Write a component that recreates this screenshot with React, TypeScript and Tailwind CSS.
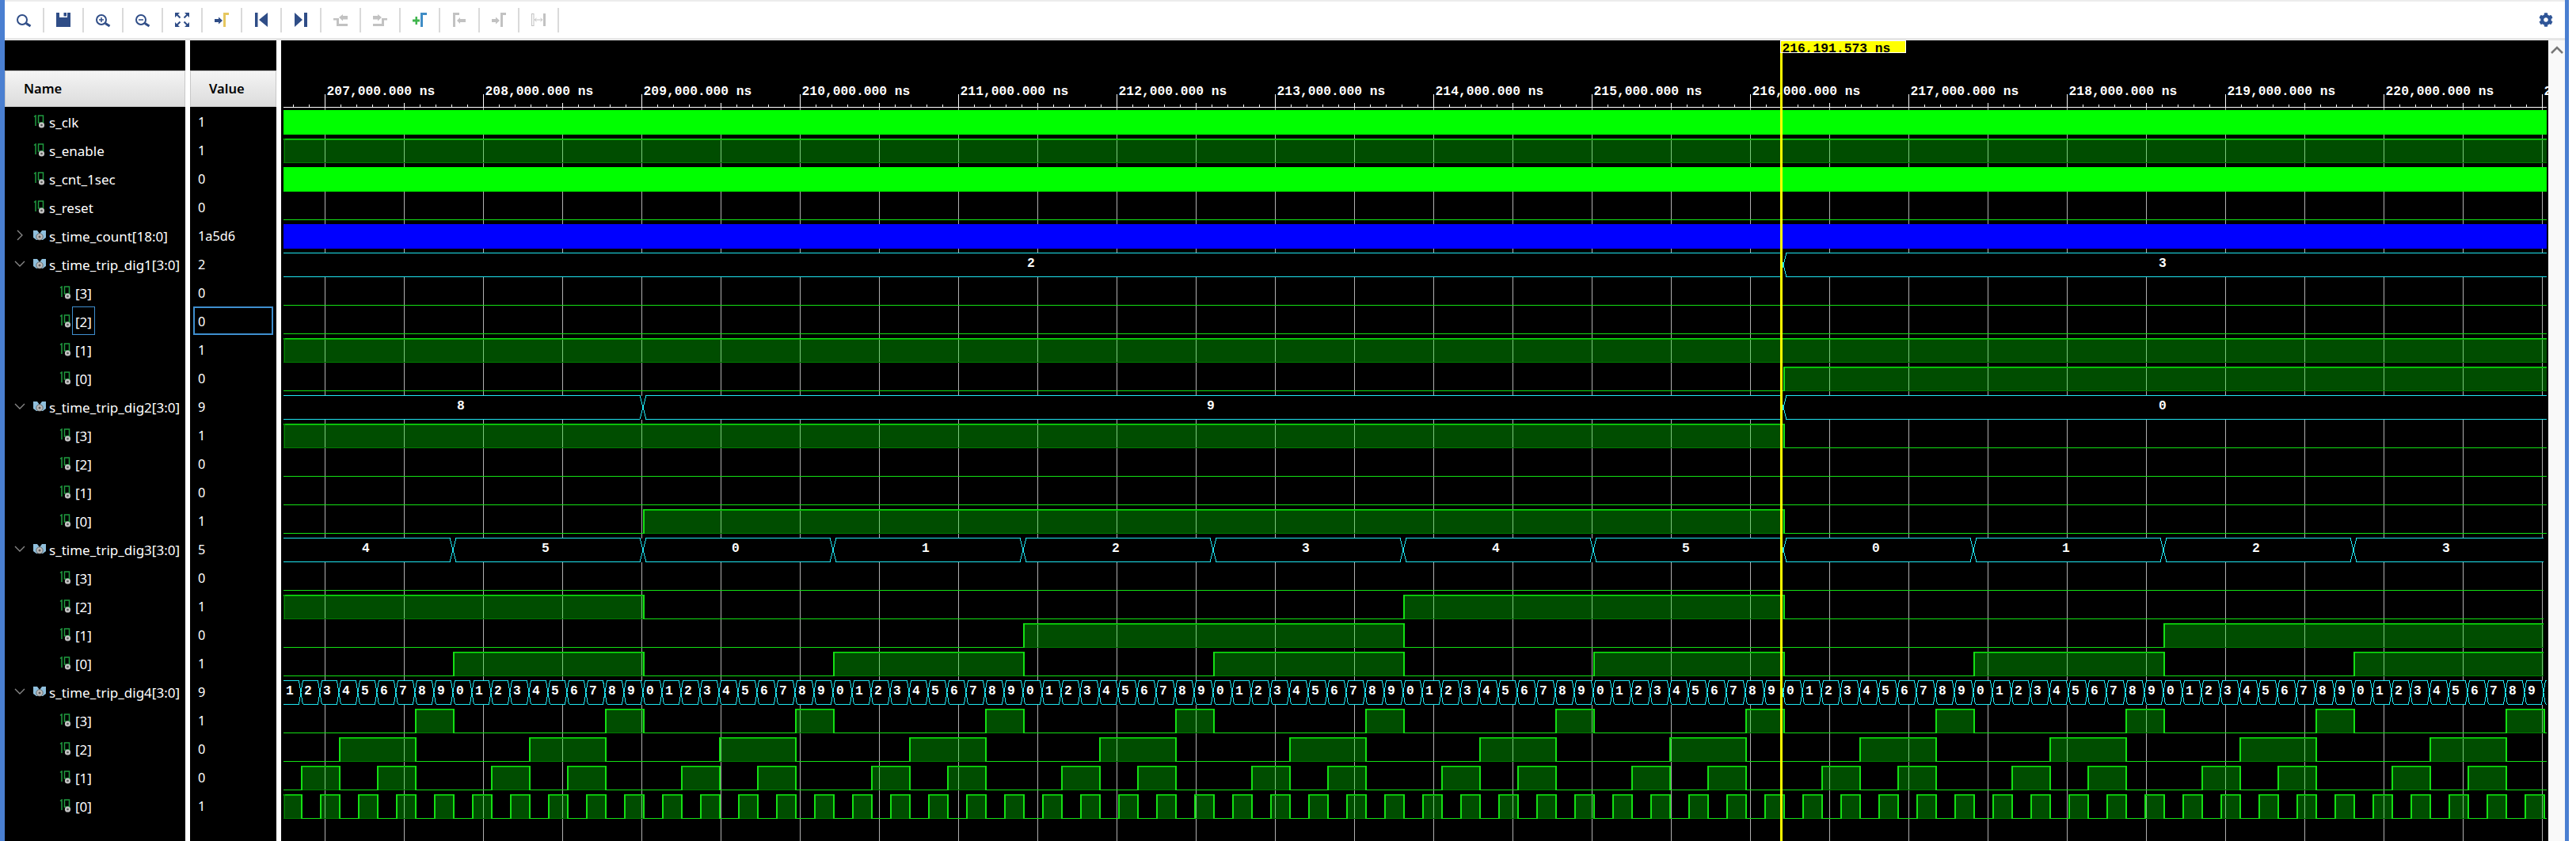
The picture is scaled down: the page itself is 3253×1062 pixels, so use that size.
import React from "react";
import { FaCog } from "react-icons/fa";

const L = 358;
const R = 3216;
const SWITCH = 2252;
const rowTop = (i: number) => 139 + 36 * i;

type Seg = { x0: number; x1: number; v: number };

const dig1: Seg[] = [
  { x0: L, x1: SWITCH, v: 2 },
  { x0: SWITCH, x1: R, v: 3 },
];
const dig2: Seg[] = [
  { x0: L, x1: 812, v: 8 },
  { x0: 812, x1: SWITCH, v: 9 },
  { x0: SWITCH, x1: R, v: 0 },
];
const dig3: Seg[] = [];
for (let n = -1; n < 11; n++) {
  dig3.push({
    x0: Math.max(L, 572 + 240 * n),
    x1: Math.min(R, 572 + 240 * (n + 1)),
    v: (n + 5 + 6) % 6,
  });
}
const dig4: Seg[] = [];
for (let n = -9; n < 111; n++) {
  dig4.push({
    x0: Math.max(L, 572 + 24 * n),
    x1: Math.min(R, 572 + 24 * (n + 1)),
    v: ((n % 10) + 10) % 10,
  });
}

const bitSegs = (segs: Seg[], bit: number) => {
  const out: Seg[] = [];
  segs.forEach((s) => {
    const v = (s.v >> bit) & 1;
    const last = out[out.length - 1];
    if (last && last.v === v) last.x1 = s.x1;
    else out.push({ x0: s.x0, x1: s.x1, v });
  });
  return out;
};

type Row = {
  name: string;
  value: string;
  kind: "scalar" | "vector";
  child?: boolean;
  open?: boolean;
  selected?: boolean;
};

const bits = (vals: string[], selected?: number): Row[] =>
  vals.map((value, i) => ({
    name: `[${3 - i}]`,
    value,
    kind: "scalar",
    child: true,
    selected: selected === i,
  }));

const rows: Row[] = [
  { name: "s_clk", value: "1", kind: "scalar" },
  { name: "s_enable", value: "1", kind: "scalar" },
  { name: "s_cnt_1sec", value: "0", kind: "scalar" },
  { name: "s_reset", value: "0", kind: "scalar" },
  { name: "s_time_count[18:0]", value: "1a5d6", kind: "vector", open: false },
  { name: "s_time_trip_dig1[3:0]", value: "2", kind: "vector", open: true },
  ...bits(["0", "0", "1", "0"], 1),
  { name: "s_time_trip_dig2[3:0]", value: "9", kind: "vector", open: true },
  ...bits(["1", "0", "0", "1"]),
  { name: "s_time_trip_dig3[3:0]", value: "5", kind: "vector", open: true },
  ...bits(["0", "1", "0", "1"]),
  { name: "s_time_trip_dig4[3:0]", value: "9", kind: "vector", open: true },
  ...bits(["1", "0", "0", "1"]),
];

const ScalarIcon = () => (
  <svg width="16" height="17" viewBox="0 0 16 17" className="shrink-0">
    <path d="M1 2.5 L3 1 V14" fill="none" stroke="#1f9a3f" strokeWidth="1.5" />
    <rect x="6.5" y="1" width="6" height="9" fill="none" stroke="#1f9a3f" strokeWidth="1.5" />
    <circle cx="10.5" cy="13" r="3.6" fill="#c4c4c4" />
    <circle cx="10.5" cy="13" r="1.3" fill="#555" />
  </svg>
);

const VectorIcon = () => (
  <svg width="16" height="14" viewBox="0 0 16 14" className="shrink-0">
    <path d="M0 1 H5 L8 5 L11 1 H16 V10 L12 13 H4 L0 10 Z" fill="#8fbfdc" />
    <circle cx="8" cy="9" r="4.2" fill="#bdbdbd" stroke="#333" strokeWidth="0.6" />
    <circle cx="8" cy="9" r="1.5" fill="#5c5c5c" />
  </svg>
);

const Chevron = ({ open }: { open?: boolean }) => (
  <svg width="14" height="14" viewBox="0 0 14 14" className="shrink-0">
    <path
      d={open ? "M1 4 L7 10 L13 4" : "M4 1 L10 7 L4 13"}
      fill="none"
      stroke="#8a8a8a"
      strokeWidth="1.3"
    />
  </svg>
);

const BLUE = "#2f4d87";
const GREY = "#c2c2c2";

const Lens = ({ mark }: { mark?: "plus" | "minus" }) => (
  <>
    <circle cx="8" cy="10" r="6" fill="none" stroke={BLUE} strokeWidth="2" />
    <path d="M13 14.5 L18.5 18" stroke={BLUE} strokeWidth="3" />
    {mark && <path d="M5 10 H11" stroke={BLUE} strokeWidth="1.5" />}
    {mark === "plus" && <path d="M8 7 V13" stroke={BLUE} strokeWidth="1.5" />}
  </>
);

const toolIcons: React.ReactNode[] = [
  <Lens key="find" />,
  <path key="save" fillRule="evenodd" d="M1 1 H5 V7 H15 V1 H19 V19 H1 Z M10.5 1 H14 V5.5 H10.5 Z" fill={BLUE} />,
  <Lens key="in" mark="plus" />,
  <Lens key="out" mark="minus" />,
  <g key="fit" fill={BLUE}>
    <path d="M1 1 H7 L1 7 Z M19 1 H13 L19 7 Z M1 19 H7 L1 13 Z M19 19 H13 L19 13 Z" />
    <path d="M3 3 L7.5 7.5 M17 3 L12.5 7.5 M3 17 L7.5 12.5 M17 17 L12.5 12.5" stroke={BLUE} strokeWidth="2" />
  </g>,
  <g key="cursor">
    <path d="M1 9 H6 V6.5 L11 11 L6 15.5 V13 H1 Z" fill={BLUE} />
    <path d="M12 1 H19 V4 H15 V19 H12 Z" fill="#e6c75f" />
  </g>,
  <path key="first" d="M2 1 H5.5 V19 H2 Z M18 1 V19 L7 10 Z" fill={BLUE} />,
  <path key="last" d="M2 1 L12 10 L2 19 Z M14 1 H18 V19 H14 Z" fill={BLUE} />,
  <path key="prev" d="M8 7 L13 3 V5 H19 V9.5 H13 V11.5 Z M1 8 H8 V15 H19 V18 H5 V10.5 H1 Z" fill={GREY} />,
  <path key="next" d="M12 7 L7 3 V5 H1 V9.5 H7 V11.5 Z M19 8 H12 V15 H1 V18 H15 V10.5 H19 Z" fill={GREY} />,
  <g key="add">
    <path d="M1 9.5 H4.5 V6 H7 V9.5 H10 V12.5 H7 V16 H4.5 V12.5 H1 Z" fill="#3fb54d" />
    <path d="M11 1 H19 V4 H14 V19 H11 Z" fill="#3f8dc6" />
  </g>,
  <g key="prevm" fill={GREY}>
    <path d="M2 1 H10 V4 H5 V19 H2 Z" />
    <path d="M7 11 L11 7 V9 H18 V13 H11 V15 Z" />
  </g>,
  <g key="nextm" fill={GREY}>
    <path d="M12 1 H19 V4 H15 V19 H12 Z" />
    <path d="M1 9 H6 V6.5 L11 11 L6 15.5 V13 H1 Z" />
  </g>,
  <g key="swap">
    <rect x="1.5" y="2.5" width="2.5" height="15" fill="none" stroke={GREY} />
    <rect x="16" y="2" width="3" height="16" fill={GREY} />
    <path d="M5 10 H15 M7.5 8 L5 10 L7.5 12 M12.5 8 L15 10 L12.5 12" fill="none" stroke={GREY} />
  </g>,
];

const Toolbar = () => (
  <div className="flex h-[46px] items-center bg-white">
    {toolIcons.map((icon, i) => (
      <React.Fragment key={i}>
        <div className="flex w-[48px] items-center justify-center">
          <svg width="20" height="20" viewBox="0 0 20 20">
            {icon}
          </svg>
        </div>
        <div className="h-[31px] w-[2px] bg-[#dadada]" />
      </React.Fragment>
    ))}
    <div className="flex-1" />
    <FaCog className="mr-[15px] h-[18px] w-[18px] text-[#2f5597]" />
  </div>
);

const monoFont = { fontFamily: '"Liberation Mono", monospace', fontSize: 16.3, fontWeight: 700 };

const Bus = ({ row, segs, slant }: { row: number; segs: Seg[]; slant: number }) => {
  const T = rowTop(row) + 0.5;
  const B = T + 30;
  let d = "";
  segs.forEach((s, i) => {
    const start = i === 0 ? s.x0 : s.x0 + slant;
    const end = i === segs.length - 1 ? s.x1 : s.x1 - slant;
    d += `M${start} ${T} H${end} M${start} ${B} H${end} `;
    if (i < segs.length - 1) {
      d += `M${end} ${T} L${s.x1 + slant} ${B} M${end} ${B} L${s.x1 + slant} ${T} `;
    }
  });
  return (
    <g>
      <rect x={L} y={T} width={R - L} height={30} fill="#000" />
      <path d={d} fill="none" stroke="#1fe6f2" strokeWidth="1" />
      {segs.map((s, i) =>
        s.x1 - s.x0 > 8 ? (
          <text
            key={i}
            x={(s.x0 + s.x1) / 2 - 3}
            y={T + 17.5}
            textAnchor="middle"
            fill="#fff"
            style={monoFont}
          >
            {s.v}
          </text>
        ) : null,
      )}
    </g>
  );
};

const Digital = ({ row, segs }: { row: number; segs: Seg[] }) => {
  const T = rowTop(row);
  const B = T + 30;
  return (
    <g>
      {segs.map((s, i) =>
        s.v ? (
          <g key={i}>
            <rect x={s.x0} y={T} width={s.x1 - s.x0} height={31} fill="#00ff00" fillOpacity="0.3" />
            <rect x={s.x0} y={B} width={s.x1 - s.x0} height={1} fill="#007a00" />
            <rect x={s.x0} y={T} width={s.x1 - s.x0} height={1} fill="#14e014" />
            <rect x={s.x0} y={T + 1} width={s.x1 - s.x0} height={1} fill="#00a800" />
            {s.x0 === L && <rect x={L + 1} y={T} width={1} height={31} fill="#007a00" />}
          </g>
        ) : (
          <rect key={i} x={s.x0} y={B} width={s.x1 - s.x0} height={1} fill="#14e014" />
        ),
      )}
      {segs.slice(1).map((s, i) => (
        <rect key={i} x={s.x0} y={T} width={2} height={31} fill="#14e014" />
      ))}
    </g>
  );
};

const gridXs = Array.from({ length: 29 }, (_, i) => 410 + 100 * i);
const minorXs = Array.from({ length: 143 }, (_, i) => 370 + 20 * i);
const labelKs = Array.from({ length: 15 }, (_, i) => 207 + i);

const Waves = () => (
  <svg
    width="2863"
    height="1011"
    viewBox="355 51 2863 1011"
    shapeRendering="crispEdges"
    className="block"
  >
    {/* ruler */}
    <rect x={L} y={135} width={R - L} height={1} fill="#fff" />
    {minorXs.map((x) => (
      <rect key={x} x={x} y={132} width={1} height={3} fill="#fff" />
    ))}
    {gridXs.map((x) => (
      <rect key={x} x={x} y={130} width={1} height={5} fill="#fff" />
    ))}
    {labelKs.map((k, i) => (
      <g key={k}>
        <rect x={410 + 200 * i} y={119} width={1} height={16} fill="#fff" />
        <text x={412.6 + 200 * i} y={120} fill="#fff" style={monoFont}>
          {k},000.000 ns
        </text>
      </g>
    ))}
    {/* grid */}
    {gridXs.map((x) => (
      <rect key={x} x={x} y={136} width={1} height={926} fill="#b0b0b0" />
    ))}
    <rect x={L} y={rowTop(0)} width={R - L} height={31} fill="#00ff00" />
    <Digital row={1} segs={[{ x0: L, x1: R, v: 1 }]} />
    <rect x={L} y={rowTop(2)} width={R - L} height={31} fill="#00ff00" />
    <Digital row={3} segs={[{ x0: L, x1: R, v: 0 }]} />
    <rect x={L} y={rowTop(4)} width={R - L} height={31} fill="#0000ff" />

    <Bus row={5} segs={dig1} slant={4} />
    {[3, 2, 1, 0].map((b, i) => (
      <Digital key={b} row={6 + i} segs={bitSegs(dig1, b)} />
    ))}
    <Bus row={10} segs={dig2} slant={4} />
    {[3, 2, 1, 0].map((b, i) => (
      <Digital key={b} row={11 + i} segs={bitSegs(dig2, b)} />
    ))}
    <Bus row={15} segs={dig3} slant={4} />
    {[3, 2, 1, 0].map((b, i) => (
      <Digital key={b} row={16 + i} segs={bitSegs(dig3, b)} />
    ))}
    <Bus row={20} segs={dig4} slant={2.5} />
    {[3, 2, 1, 0].map((b, i) => (
      <Digital key={b} row={21 + i} segs={bitSegs(dig4, b)} />
    ))}

    {/* cursor */}
    <rect x={2248} y={51} width={3} height={1011} fill="#ffff00" />
    <svg x={2248} y={51} width={159} height={16}>
      <rect x={0} y={0} width={159} height={16} fill="#ffff00" />
      <text x={2.5} y={15} fill="#000" style={monoFont}>
        216,191.573 ns
      </text>
      <rect x={0.5} y={0.5} width={158} height={15} fill="none" stroke="#fff" />
    </svg>
  </svg>
);

const sans = "font-['Noto_Sans','Open_Sans',sans-serif] text-white";

const NameRow = ({ row }: { row: Row }) => (
  <div className={`flex h-[36px] items-center ${row.child ? "pl-[69px]" : "pl-[12px]"}`}>
    {!row.child && (
      <div className="flex w-[24px] items-center">
        {row.open !== undefined && <Chevron open={row.open} />}
      </div>
    )}
    {row.kind === "scalar" ? <ScalarIcon /> : <VectorIcon />}
    <span
      className={`flex h-full items-center whitespace-nowrap border px-[3px] pt-[3px] text-[17px] ${
        row.selected ? "border-[#3f8fcf]" : "border-transparent"
      } ${sans}`}
    >
      {row.name}
    </span>
  </div>
);

const ValueRow = ({ row }: { row: Row }) => (
  <div
    className={`mx-[4px] flex h-[36px] items-center border-2 pl-[4px] pt-[3px] text-[16.3px] ${
      row.selected ? "border-[#3f8fcf]" : "border-transparent"
    } ${sans}`}
  >
    {row.value}
  </div>
);

const HeaderCell = ({ title }: { title: string }) => (
  <div className="mt-[38px] flex h-[46px] items-center border border-[#c8c8c8] bg-gradient-to-b from-[#f4f4f4] to-[#dcdcdc] pl-[23px] font-['Noto_Sans',sans-serif] text-[16.5px] font-semibold text-black">
    {title}
  </div>
);

export default function App() {
  return (
    <div className="flex h-[1062px] w-[3253px] overflow-hidden bg-white">
      <div className="w-[6px] bg-[#4a7fd1]" />
      <div className="flex w-[3233px] flex-col">
        <div className="h-[2px] bg-[#ececec]" />
        <Toolbar />
        <div className="h-[3px] bg-[#e6e6e6]" />
        <div className="flex flex-1 bg-white">
          <div className="w-[228px] bg-black">
            <HeaderCell title="Name" />
            {rows.map((r, i) => (
              <NameRow key={i} row={r} />
            ))}
          </div>
          <div className="ml-[6px] w-[109px] bg-black">
            <HeaderCell title="Value" />
            {rows.map((r, i) => (
              <ValueRow key={i} row={r} />
            ))}
          </div>
          <div className="ml-[6px] w-[2863px] bg-black">
            <Waves />
          </div>
          <div className="flex w-[21px] justify-center bg-[#f9f9f9] pt-[7px]">
            <svg width="16" height="10" viewBox="0 0 16 10">
              <path d="M1 9 L8 2 L15 9" fill="none" stroke="#777" strokeWidth="2.5" />
            </svg>
          </div>
        </div>
      </div>
      <div className="w-[5px] bg-[#4a7fd1]" />
      <div className="flex-1 bg-white" />
    </div>
  );
}
